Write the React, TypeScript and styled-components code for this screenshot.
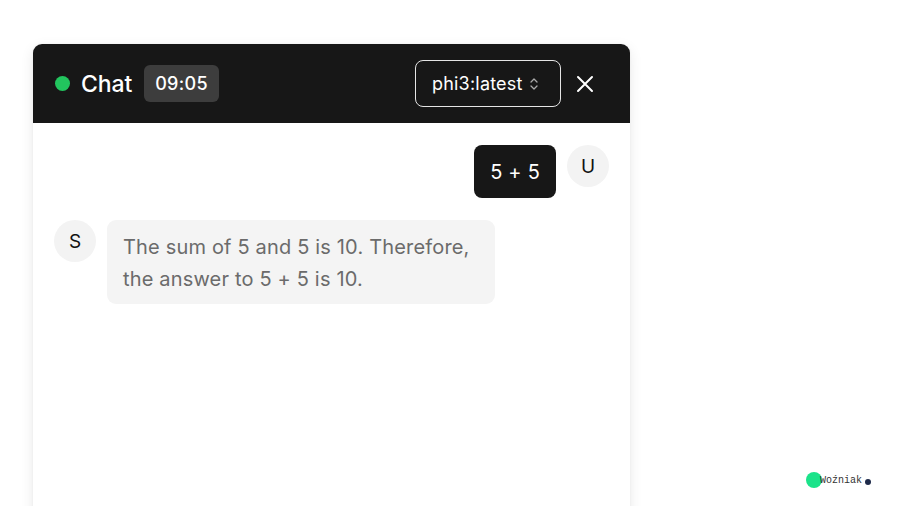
import React from "react";
import styled, { createGlobalStyle } from "styled-components";

const Global = createGlobalStyle`
  html, body { margin: 0; padding: 0; background: #ffffff; }
  body { font-family: Inter, "Noto Sans", sans-serif; overflow: hidden; }
`;

const Page = styled.div`
  position: relative;
  width: 900px;
  height: 506px;
  padding: 44px 0 0 33px;
  box-sizing: border-box;
  overflow: hidden;
`;

const Panel = styled.div`
  width: 597px;
  height: 520px;
  border-radius: 9px 9px 0 0;
  background: #ffffff;
  box-shadow: 0 4px 14px rgba(0, 0, 0, 0.09), 0 0 3px rgba(0, 0, 0, 0.05);
  display: flex;
  flex-direction: column;
  overflow: hidden;
`;

const Header = styled.div`
  height: 79px;
  background: #171717;
  display: flex;
  align-items: center;
  padding: 0 27px 0 22px;
  box-sizing: border-box;
`;

const Dot = styled.span`
  width: 15px;
  height: 15px;
  border-radius: 50%;
  background: #22c55e;
  flex: none;
`;

const Title = styled.span`
  color: #ffffff;
  font-size: 23px;
  font-weight: 500;
  margin-left: 11px;
  letter-spacing: -0.1px;
`;

const TimeBadge = styled.span`
  margin-left: 12px;
  height: 37px;
  padding: 0 11px;
  display: flex;
  align-items: center;
  border-radius: 6px;
  background: #3d3d3d;
  color: #ffffff;
  font-size: 18px;
  font-weight: 500;
  letter-spacing: 0.3px;
`;

const Spacer = styled.div`
  flex: 1;
`;

const Select = styled.div`
  height: 47px;
  width: 146px;
  box-sizing: border-box;
  border: 1px solid #e5e5e5;
  border-radius: 8px;
  display: flex;
  align-items: center;
  padding-left: 16px;
  gap: 5px;
  color: #ffffff;
  font-size: 18px;
  font-weight: 400;
  letter-spacing: 0.2px;
`;

const CloseBtn = styled.div`
  width: 36px;
  height: 36px;
  margin-left: 6px;
  display: flex;
  align-items: center;
  justify-content: center;
`;

const Body = styled.div`
  flex: 1;
  padding: 22px 21px;
  display: flex;
  flex-direction: column;
  gap: 22px;
`;

const Row = styled.div<{ $mine?: boolean }>`
  display: flex;
  align-items: flex-start;
  gap: 11px;
  justify-content: ${(p) => (p.$mine ? "flex-end" : "flex-start")};
`;

const Avatar = styled.div`
  width: 42px;
  height: 42px;
  border-radius: 50%;
  background: #f3f3f3;
  display: flex;
  align-items: center;
  justify-content: center;
  font-size: 19px;
  color: #111;
  flex: none;
`;

const UserBubble = styled.div`
  background: #171717;
  color: #fff;
  border-radius: 8px;
  padding: 0 16px;
  height: 53px;
  display: flex;
  align-items: center;
  font-size: 20px;
  letter-spacing: 0.2px;
`;

const BotBubble = styled.div`
  background: #f4f4f4;
  color: #6b6b6b;
  border-radius: 9px;
  padding: 11px 16px 9px 16px;
  width: 388px;
  box-sizing: border-box;
  font-size: 20px;
  line-height: 32px;
  letter-spacing: 0.17px;
`;

const Mark = styled.div`
  position: absolute;
  left: 806px;
  top: 472px;
  display: flex;
  align-items: center;
`;

const MarkDot = styled.span`
  width: 16px;
  height: 16px;
  border-radius: 50%;
  background: #1be38a;
  flex: none;
`;

const MarkText = styled.span`
  font-family: "Liberation Mono", "DejaVu Sans Mono", monospace;
  font-size: 10px;
  color: #333;
  margin-left: -2px;
`;

const MarkSmall = styled.span`
  width: 6px;
  height: 6px;
  border-radius: 50%;
  background: #1e2a4a;
  margin-left: 3px;
  margin-top: 4px;
`;

export default function App() {
  return (
    <>
      <Global />
      <Page>
        <Panel>
          <Header>
            <Dot />
            <Title>Chat</Title>
            <TimeBadge>09:05</TimeBadge>
            <Spacer />
            <Select>
              <span>phi3:latest</span>
              <svg width="12" height="14" viewBox="0 0 12 14" fill="none" stroke="#aaa" strokeWidth="1.3" strokeLinecap="round" strokeLinejoin="round">
                <path d="M3 5l3-3 3 3" />
                <path d="M3 9l3 3 3-3" />
              </svg>
            </Select>
            <CloseBtn>
              <svg width="20" height="20" viewBox="0 0 20 20" fill="none" stroke="#fff" strokeWidth="2" strokeLinecap="round">
                <path d="M3 3l14 14M17 3L3 17" />
              </svg>
            </CloseBtn>
          </Header>
          <Body>
            <Row $mine>
              <UserBubble>5 + 5</UserBubble>
              <Avatar>U</Avatar>
            </Row>
            <Row>
              <Avatar>S</Avatar>
              <BotBubble>The sum of 5 and 5 is 10. Therefore, the answer to 5 + 5 is 10.</BotBubble>
            </Row>
          </Body>
        </Panel>
        <Mark>
          <MarkDot />
          <MarkText>Woźniak</MarkText>
          <MarkSmall />
        </Mark>
      </Page>
    </>
  );
}
